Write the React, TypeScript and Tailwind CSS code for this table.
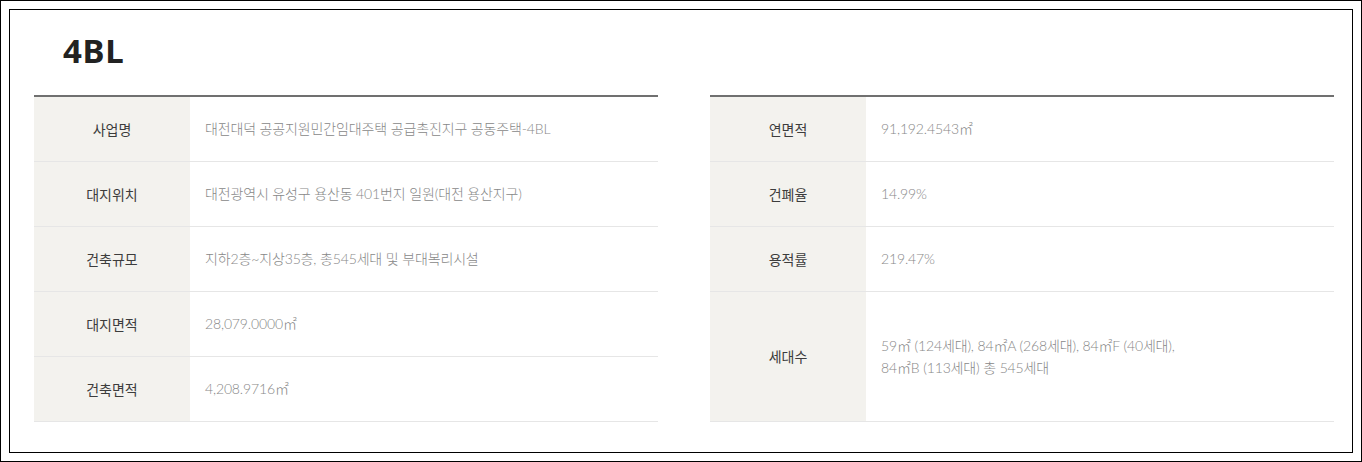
import React from 'react';

type Row = { label: string; value: React.ReactNode; tall?: boolean };

const M2 = () => <span>㎡</span>;

const LEFT_ROWS: Row[] = [
  { label: '사업명', value: '대전대덕 공공지원민간임대주택 공급촉진지구 공동주택-4BL' },
  { label: '대지위치', value: '대전광역시 유성구 용산동 401번지 일원(대전 용산지구)' },
  { label: '건축규모', value: '지하2층~지상35층, 총545세대 및 부대복리시설' },
  { label: '대지면적', value: <>28,079.0000<M2 /></> },
  { label: '건축면적', value: <>4,208.9716<M2 /></> },
];

const RIGHT_ROWS: Row[] = [
  { label: '연면적', value: <>91,192.4543<M2 /></> },
  { label: '건폐율', value: '14.99%' },
  { label: '용적률', value: '219.47%' },
  {
    label: '세대수',
    tall: true,
    value: (
      <>
        59<M2 /> (124세대), 84<M2 />A (268세대), 84<M2 />F (40세대),
        <br />
        84<M2 />B (113세대) 총 545세대
      </>
    ),
  },
];

const SpecTable: React.FC<{ rows: Row[] }> = ({ rows }) => (
  <div className="w-[624px] border-t-2 border-[#707070] flex flex-col">
    {rows.map((row) => (
      <div
        key={row.label}
        className={`flex border-b border-[#e6e6e6] ${row.tall ? 'h-[130px]' : 'h-[65px]'}`}
      >
        <div className="w-[156px] shrink-0 bg-[#f3f2ee] flex items-center justify-center text-[14px] text-[#3c3c3c]">
          {row.label}
        </div>
        <div className="flex-1 flex items-center pl-[15px] text-[14px] font-light text-[#888] leading-[22px] tracking-[-0.01em]">
          <p>{row.value}</p>
        </div>
      </div>
    ))}
  </div>
);

export default function App() {
  return (
    <div
      className="w-[1362px] h-[462px] border border-black p-2 bg-white"
      style={{ fontFamily: "Lato, 'Noto Sans CJK KR', sans-serif" }}
    >
      <div className="h-full border border-black bg-white">
        <h2
          className="pt-[24px] pl-[53px] text-[33px] leading-[33px] font-bold text-[#222] tracking-[0.02em]"
          style={{ fontFamily: "'Noto Sans', sans-serif" }}
        >
          4BL
        </h2>
        <div className="flex gap-[52px] ml-[24px] mt-[28px]">
          <SpecTable rows={LEFT_ROWS} />
          <SpecTable rows={RIGHT_ROWS} />
        </div>
      </div>
    </div>
  );
}
